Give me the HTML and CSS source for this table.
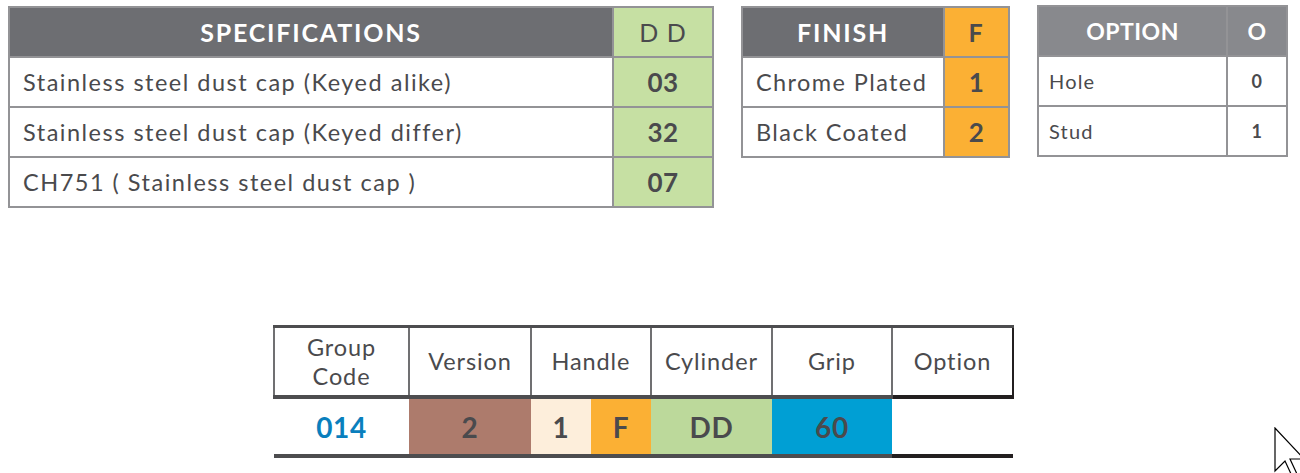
FILE: index.html
```html
<!DOCTYPE html>
<html>
<head>
<meta charset="utf-8">
<link rel="stylesheet" href="styles.css">
</head>
<body>
<div class="page">
  <div class="top">
    <table class="tbl spec">
      <tr class="head"><th class="name">SPECIFICATIONS</th><th class="code green">D D</th></tr>
      <tr><td class="name">Stainless steel dust cap (Keyed alike)</td><td class="code green">03</td></tr>
      <tr><td class="name">Stainless steel dust cap (Keyed differ)</td><td class="code green">32</td></tr>
      <tr><td class="name">CH751 ( Stainless steel dust cap )</td><td class="code green">07</td></tr>
    </table>
    <table class="tbl finish">
      <tr class="head"><th class="name">FINISH</th><th class="code orange">F</th></tr>
      <tr><td class="name">Chrome Plated</td><td class="code orange">1</td></tr>
      <tr><td class="name">Black Coated</td><td class="code orange">2</td></tr>
    </table>
    <table class="tbl option">
      <tr class="head"><th class="name">OPTION</th><th class="code">O</th></tr>
      <tr><td class="name">Hole</td><td class="code">0</td></tr>
      <tr><td class="name">Stud</td><td class="code">1</td></tr>
    </table>
  </div>
  <table class="order">
    <colgroup>
      <col class="w-group"><col class="w-ver"><col class="w-h1"><col class="w-hf"><col class="w-cyl"><col class="w-grip"><col class="w-opt">
    </colgroup>
    <tr class="ohead">
      <th>Group<br>Code</th>
      <th>Version</th>
      <th colspan="2">Handle</th>
      <th>Cylinder</th>
      <th>Grip</th>
      <th class="c-opt">Option</th>
    </tr>
    <tr class="orow">
      <td class="v-group">014</td>
      <td class="v-ver">2</td>
      <td class="v-h1">1</td>
      <td class="v-hf">F</td>
      <td class="v-cyl">DD</td>
      <td class="v-grip">60</td>
      <td class="v-opt"></td>
    </tr>
  </table>
</div>
<svg class="cursor" width="30" height="50" viewBox="0 0 30 50"><path d="M1 1 L1 44 L11 34 L18 49 L23 47 L16 32 L30 32 Z" fill="#fff" stroke="#000" stroke-width="1.2"/></svg>
</body>
</html>
```
FILE: styles.css
```css
html, body {
  margin: 0;
  padding: 0;
  background: #fff;
}
body {
  width: 1300px;
  height: 473px;
  overflow: hidden;
  position: relative;
  font-family: Lato, "Open Sans", sans-serif;
  color: #4a4a4d;
}
.page {
  padding: 6px 0 0 8px;
}
.top {
  display: flex;
  align-items: flex-start;
  gap: 27px;
}
.tbl {
  border-collapse: collapse;
  table-layout: fixed;
}
.tbl th, .tbl td {
  border: 2px solid #939396;
  padding: 0;
  height: 50px;
  box-sizing: border-box;
}
.tbl .head th {
  background: #6d6e72;
  color: #fff;
  font-weight: 700;
  font-size: 25px;
  letter-spacing: 1.8px;
  text-align: center;
}
.tbl td.name {
  font-size: 23.5px;
  padding-left: 13px;
  text-align: left;
  letter-spacing: 1.5px;
  white-space: nowrap;
}
.tbl td.code {
  font-weight: 700;
  font-size: 26px;
  letter-spacing: 0.5px;
  text-align: center;
}
.tbl .head th.green {
  background: #c6e0a3;
  color: #4a4a4d;
  font-weight: 400;
  letter-spacing: 1px;
}
.tbl .head th.orange {
  background: #fbb034;
  color: #4a4a4d;
  font-weight: 700;
}
.green { background: #c6e0a3; }
.orange { background: #fbb034; }

.spec { width: 706px; }
.spec .name { width: 604px; }
.finish { width: 269px; }
.finish .name { width: 202px; }
.finish td.name { letter-spacing: 1.4px; }

.option { width: 251px; margin-top: -1px; }
.option .name { width: 189px; }
.tbl.option .head th { background: #88898d; font-size: 23px; letter-spacing: 0.5px; }
.tbl.option td.name { font-size: 20px; padding-left: 10px; letter-spacing: 1.2px; }
.option td.code { font-size: 18px; }

.order {
  margin: 117px 0 0 265px;
  border-collapse: collapse;
  table-layout: fixed;
  width: 741px;
}
.w-group { width: 18.27%; }
.w-ver { width: 16.5%; }
.w-h1 { width: 8.12%; }
.w-hf { width: 8.12%; }
.w-cyl { width: 16.37%; }
.w-grip { width: 16.24%; }
.w-opt { width: 16.38%; }
.order th {
  border-left: 2px solid #707072;
  border-right: 2px solid #707072;
  border-top: 3px solid #4d4d4f;
  border-bottom: 4px solid #4d4d4f;
  font-weight: 400;
  font-size: 23.5px;
  letter-spacing: 0.9px;
  line-height: 29px;
  height: 67px;
  padding: 0;
  color: #4a4a4d;
}
.order th.c-opt {
  border-bottom-color: #231f20;
  border-right-color: #231f20;
}
.order td {
  height: 55px;
  padding: 0;
  text-align: center;
  font-weight: 700;
  font-size: 28px;
  letter-spacing: 0.6px;
  border-bottom: 4px solid #4d4d4f;
}
.order td.v-opt { border-bottom-color: #231f20; }
.v-group { color: #0a7fbd; }
.v-ver { background: #ad7b6c; }
.v-h1 { background: #fdeedb; }
.v-hf { background: #fbb034; }
.v-cyl { background: #bcd99b; }
.v-grip { background: #009fd4; }

.cursor {
  position: absolute;
  left: 1274px;
  top: 427px;
}
```
